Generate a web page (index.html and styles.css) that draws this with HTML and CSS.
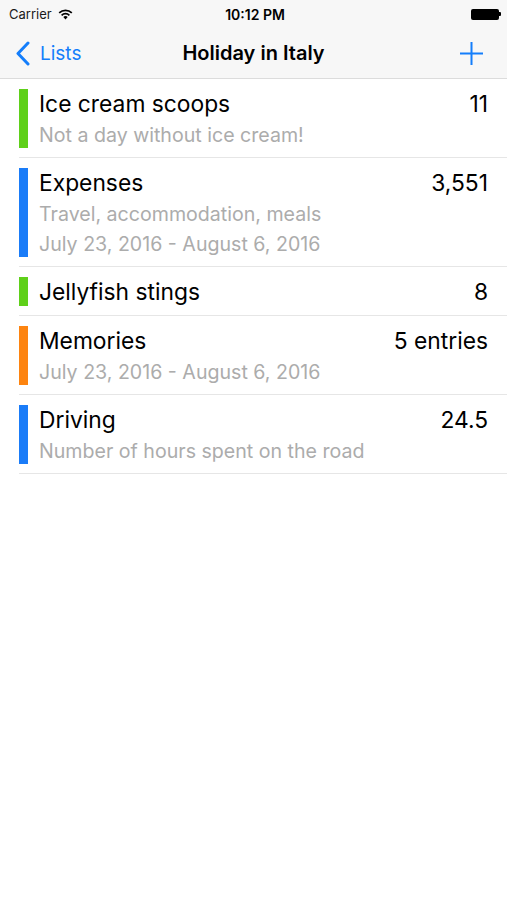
FILE: index.html
```html
<!DOCTYPE html>
<html lang="en">
<head>
    <meta charset="UTF-8">
    <meta name="viewport" content="width=device-width, initial-scale=1.0">
    <title>Holiday in Italy</title>
    <link rel="stylesheet" href="styles.css">
</head>
<body>
    <div class="top-bar">
        <div class="status-bar">
            <div class="carrier">
                Carrier
                <svg class="wifi" width="15" height="11" viewBox="0 0 15 11">
                    <path d="M7.5 10.5 L5.3 8.1 A3.2 3.2 0 0 1 9.7 8.1 Z" fill="#000"/>
                    <path d="M3.6 6.3 A5.6 5.6 0 0 1 11.4 6.3" stroke="#000" stroke-width="1.7" fill="none"/>
                    <path d="M1.2 3.9 A9 9 0 0 1 13.8 3.9" stroke="#000" stroke-width="1.7" fill="none"/>
                </svg>
            </div>
            <div class="time">10:12 PM</div>
            <div class="battery">
                <span class="battery-body"></span>
                <span class="battery-nub"></span>
            </div>
        </div>
        <div class="nav-bar">
            <div class="back">
                <svg width="16" height="25" viewBox="0 0 16 25">
                    <path d="M13 2 L3 12.5 L13 23" stroke="#147efb" stroke-width="3" fill="none" stroke-linecap="round" stroke-linejoin="round"/>
                </svg>
                <span>Lists</span>
            </div>
            <h1 class="title">Holiday in Italy</h1>
            <div class="add">
                <svg width="23" height="23" viewBox="0 0 23 23">
                    <path d="M11.5 0 V23 M0 11.5 H23" stroke="#147efb" stroke-width="2" fill="none"/>
                </svg>
            </div>
        </div>
    </div>

    <ul class="lists">
        <li class="list-row">
            <span class="marker green"></span>
            <div class="list-text">
                <div class="list-name">Ice cream scoops</div>
                <div class="list-sub">Not a day without ice cream!</div>
            </div>
            <div class="list-value">11</div>
        </li>
        <li class="list-row">
            <span class="marker blue"></span>
            <div class="list-text">
                <div class="list-name">Expenses</div>
                <div class="list-sub">Travel, accommodation, meals</div>
                <div class="list-sub">July 23, 2016 - August 6, 2016</div>
            </div>
            <div class="list-value">3,551</div>
        </li>
        <li class="list-row">
            <span class="marker green"></span>
            <div class="list-text">
                <div class="list-name">Jellyfish stings</div>
            </div>
            <div class="list-value">8</div>
        </li>
        <li class="list-row">
            <span class="marker orange"></span>
            <div class="list-text">
                <div class="list-name">Memories</div>
                <div class="list-sub">July 23, 2016 - August 6, 2016</div>
            </div>
            <div class="list-value">5 entries</div>
        </li>
        <li class="list-row">
            <span class="marker blue"></span>
            <div class="list-text">
                <div class="list-name">Driving</div>
                <div class="list-sub">Number of hours spent on the road</div>
            </div>
            <div class="list-value">24.5</div>
        </li>
    </ul>
</body>
</html>
```

FILE: styles.css
```css
body {
    margin: 0;
    font-family: Inter, "Liberation Sans", Arial, sans-serif;
    background-color: #ffffff;
    color: #000;
}

/* Status + navigation bar */
.top-bar {
    background-color: #f7f7f7;
    border-bottom: 1px solid #dcdcdc;
}

.status-bar {
    height: 28px;
    display: grid;
    grid-template-columns: 1fr auto 1fr;
    align-items: center;
    padding: 0 6px 0 9px;
    font-size: 13px;
}

.carrier {
    display: flex;
    align-items: center;
    gap: 6px;
    color: #1a1a1a;
}

.time {
    font-weight: 600;
    font-size: 14px;
}

.battery {
    display: flex;
    justify-content: flex-end;
    align-items: center;
}

.battery-body {
    width: 28px;
    height: 11px;
    background-color: #000;
    border-radius: 2px;
}

.battery-nub {
    width: 2px;
    height: 4px;
    background-color: #000;
    border-radius: 0 1px 1px 0;
}

.nav-bar {
    height: 50px;
    display: grid;
    grid-template-columns: 1fr auto 1fr;
    align-items: center;
    padding: 0 15px;
}

.back {
    display: flex;
    align-items: center;
    gap: 9px;
    color: #147efb;
    font-size: 19px;
}

.back svg {
    display: block;
}

.title {
    margin: 0;
    font-size: 20px;
    font-weight: 600;
}

.add {
    display: flex;
    justify-content: flex-end;
    padding-right: 9px;
}

.add svg {
    display: block;
}

/* List rows */
.lists {
    list-style: none;
    margin: 0;
    padding: 0 0 0 19px;
}

.list-row {
    display: flex;
    align-items: flex-start;
    padding: 10px 19px 9px 0;
    border-bottom: 1px solid #e6e6e6;
}

.marker {
    width: 9px;
    align-self: stretch;
    margin-right: 11px;
}

.marker.green {
    background-color: #5fd01a;
}

.marker.blue {
    background-color: #1a7cf8;
}

.marker.orange {
    background-color: #fd8410;
}

.list-text {
    flex: 1;
}

.list-name {
    font-size: 22.8px;
    line-height: 29px;
}

.list-sub {
    font-size: 19.6px;
    line-height: 25px;
    padding-top: 5px;
    color: #acacac;
}

.list-value {
    font-size: 22.8px;
    line-height: 29px;
}
```
